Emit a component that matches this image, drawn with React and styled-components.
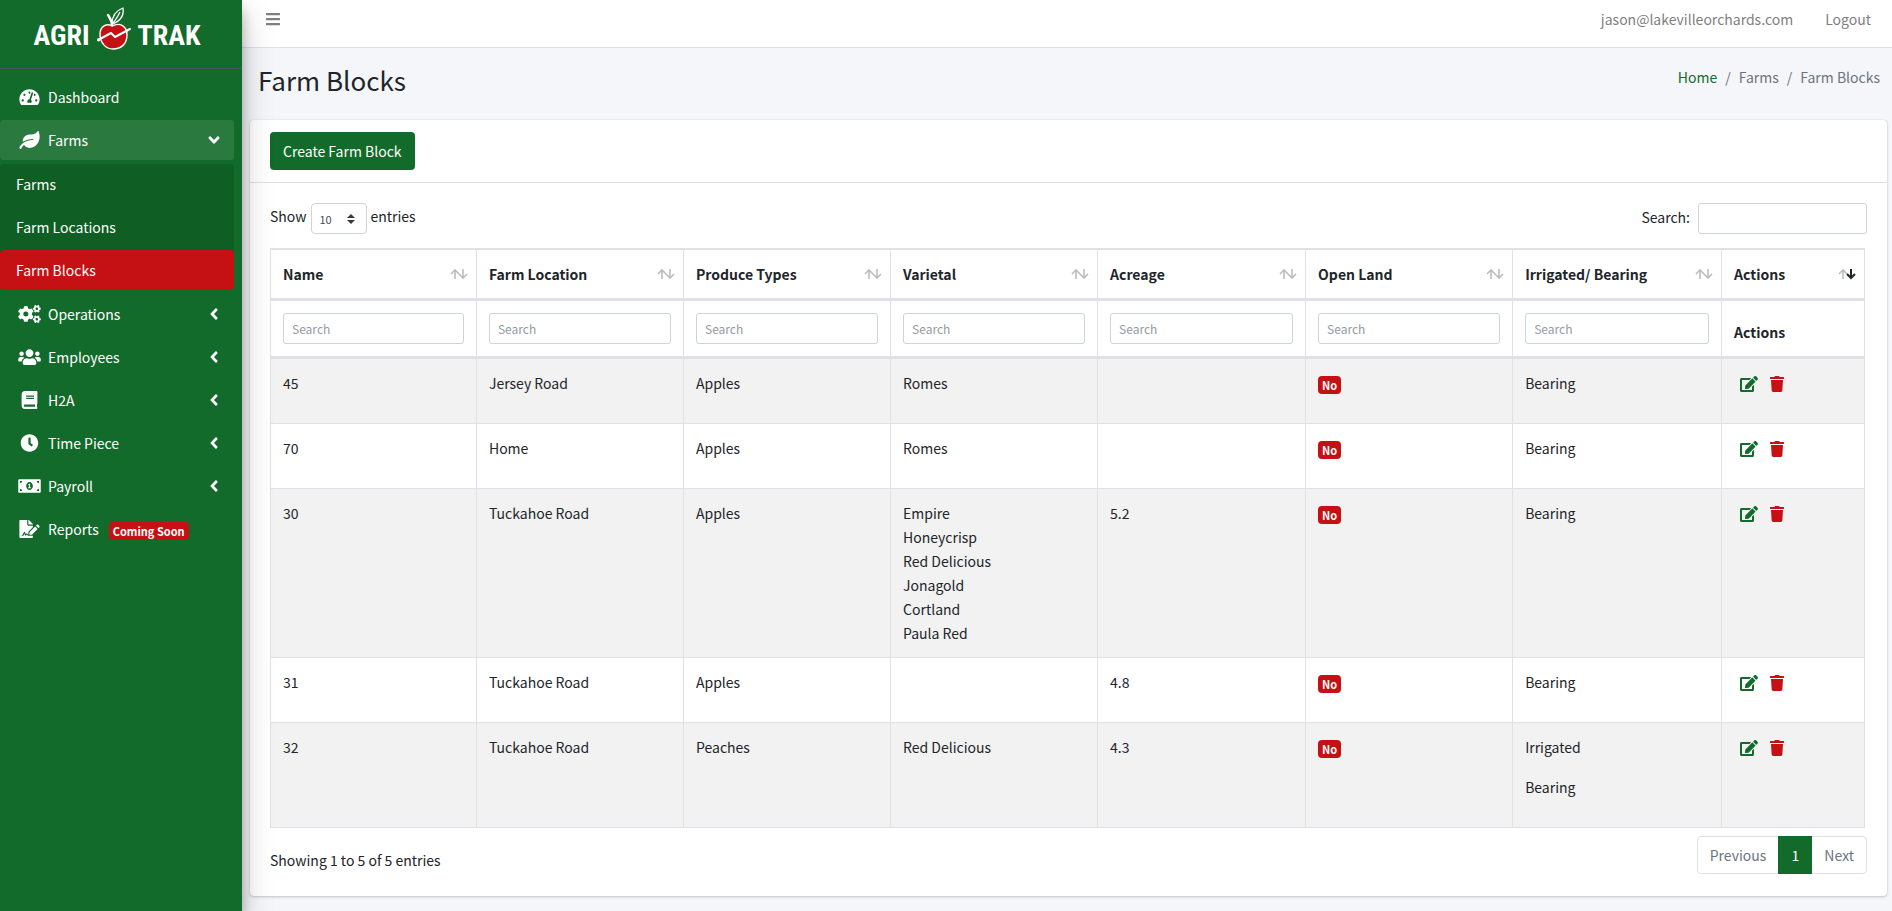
import React, { useState } from 'react';
import styled, { createGlobalStyle } from 'styled-components';
import {
    FaTachometerAlt, FaLeaf, FaCogs, FaUsers, FaBook, FaClock, FaMoneyBillAlt,
    FaFileSignature, FaAngleLeft, FaAngleDown, FaBars, FaEdit, FaTrash,
} from 'react-icons/fa';

const GREEN = '#126b2a';
const RED = '#c51114';
const LINE = '#dee2e6';

const farmPages = ['Farms', 'Farm Locations', 'Farm Blocks'];

const menu = [
    { label: 'Operations', icon: FaCogs },
    { label: 'Employees', icon: FaUsers },
    { label: 'H2A', icon: FaBook },
    { label: 'Time Piece', icon: FaClock },
    { label: 'Payroll', icon: FaMoneyBillAlt },
];

const columns = [
    { label: 'Name', width: '12.92%' },
    { label: 'Farm Location', width: '12.99%' },
    { label: 'Produce Types', width: '12.99%' },
    { label: 'Varietal', width: '12.99%' },
    { label: 'Acreage', width: '13.05%' },
    { label: 'Open Land', width: '12.99%' },
    { label: 'Irrigated/ Bearing', width: '13.11%' },
    { label: 'Actions', width: '8.96%' },
];

const blocks = [
    { name: '45', location: 'Jersey Road', produce: 'Apples', varietals: ['Romes'], acreage: '', tags: ['Bearing'] },
    { name: '70', location: 'Home', produce: 'Apples', varietals: ['Romes'], acreage: '', tags: ['Bearing'] },
    {
        name: '30', location: 'Tuckahoe Road', produce: 'Apples',
        varietals: ['Empire', 'Honeycrisp', 'Red Delicious', 'Jonagold', 'Cortland', 'Paula Red'],
        acreage: '5.2', tags: ['Bearing'],
    },
    { name: '31', location: 'Tuckahoe Road', produce: 'Apples', varietals: [], acreage: '4.8', tags: ['Bearing'] },
    { name: '32', location: 'Tuckahoe Road', produce: 'Peaches', varietals: ['Red Delicious'], acreage: '4.3', tags: ['Irrigated', 'Bearing'] },
];

function Logo() {
    return (
        <LogoLink href="#" aria-label="Agri Trak">
            <LogoWord>AGRI</LogoWord>
            <svg width="36" height="44" viewBox="0 0 36 44">
                <path d="M16 20 C11 17 4 20 4 28 C4 37 10 43 17 43 C25 43 31 38 31 29 C31 20 24 16 16 20Z" fill={RED} stroke="#fff" strokeWidth="1.4" />
                <path d="M16 19 C16 15 14 12 12 9" fill="none" stroke="#fff" strokeWidth="2.4" strokeLinecap="round" />
                <path d="M16 18 C16 10 19 5 27 2 C28 9 25 15 16 18 C20 14 22 10 24 6" fill="none" stroke="#fff" strokeWidth="1.3" strokeLinejoin="round" />
                <path d="M2 34 L15 27 L19 31 L34 23" fill="none" stroke="#fff" strokeWidth="2" strokeLinecap="round" strokeLinejoin="round" />
                <circle cx="2.6" cy="33.8" r="1.6" fill="#fff" />
            </svg>
            <LogoWord>TRAK</LogoWord>
        </LogoLink>
    );
}

function SortArrows({ descending }) {
    return (
        <svg width="18" height="12" viewBox="0 0 18 12" fill="none" stroke="#212529">
            <path d="M5 11V2M1 6L5 2L9 6" strokeWidth="1.6" opacity="0.3" />
            <path d="M13 1V10M9 6L13 10L17 6" strokeWidth={descending ? 2 : 1.6} opacity={descending ? 1 : 0.3} />
        </svg>
    );
}

function Sidebar() {
    return (
        <Side>
            <Logo />
            <Nav>
                <NavLink href="#"><NavIcon><FaTachometerAlt /></NavIcon>Dashboard</NavLink>
                <NavLink href="#" $open>
                    <NavIcon><FaLeaf /></NavIcon>Farms<Arrow><FaAngleDown /></Arrow>
                </NavLink>
                <Tree>
                    {farmPages.map((page) => (
                        <TreeLink key={page} href="#" $active={page === 'Farm Blocks'}>{page}</TreeLink>
                    ))}
                </Tree>
                {menu.map(({ label, icon: Icon }) => (
                    <NavLink key={label} href="#">
                        <NavIcon><Icon /></NavIcon>{label}<Arrow><FaAngleLeft /></Arrow>
                    </NavLink>
                ))}
                <NavLink href="#">
                    <NavIcon><FaFileSignature /></NavIcon>Reports<SoonBadge>Coming Soon</SoonBadge>
                </NavLink>
            </Nav>
        </Side>
    );
}

function BlocksTable() {
    return (
        <Table>
            <colgroup>
                {columns.map(({ label, width }) => <Col key={label} $width={width} />)}
            </colgroup>
            <thead>
                <tr>
                    {columns.map(({ label }) => (
                        <HeadCell key={label} scope="col">
                            <SortButton type="button">
                                {label}
                                <SortArrows descending={label === 'Actions'} />
                            </SortButton>
                        </HeadCell>
                    ))}
                </tr>
                <tr>
                    {columns.map(({ label }) => (
                        <HeadCell key={label}>
                            {label === 'Actions' ? label : <FilterInput type="text" placeholder="Search" aria-label={label} />}
                        </HeadCell>
                    ))}
                </tr>
            </thead>
            <tbody>
                {blocks.map((block) => (
                    <BodyRow key={block.name}>
                        <Cell>{block.name}</Cell>
                        <Cell>{block.location}</Cell>
                        <Cell>{block.produce}</Cell>
                        <Cell>{block.varietals.map((v) => <div key={v}>{v}</div>)}</Cell>
                        <Cell>{block.acreage}</Cell>
                        <Cell><LandBadge>No</LandBadge></Cell>
                        <Cell>{block.tags.map((tag) => <Tag key={tag}>{tag}</Tag>)}</Cell>
                        <Cell>
                            <Actions>
                                <IconButton type="button" aria-label="Edit" $color={GREEN} $width="18px"><FaEdit /></IconButton>
                                <IconButton type="button" aria-label="Delete" $color={RED} $width="14px"><FaTrash /></IconButton>
                            </Actions>
                        </Cell>
                    </BodyRow>
                ))}
            </tbody>
        </Table>
    );
}

function App() {
    const [length, setLength] = useState('10');

    return (
        <>
            <GlobalStyle />
            <Page>
                <Sidebar />
                <Content>
                    <TopBar>
                        <MenuButton type="button" aria-label="Toggle menu"><FaBars /></MenuButton>
                        <TopLinks>
                            <TopLink href="#">jason@lakevilleorchards.com</TopLink>
                            <TopLink href="#">Logout</TopLink>
                        </TopLinks>
                    </TopBar>
                    <PageHeader>
                        <Title>Farm Blocks</Title>
                        <Breadcrumb>
                            <a href="#">Home</a>
                            <span>/</span>
                            <span>Farms</span>
                            <span>/</span>
                            <span>Farm Blocks</span>
                        </Breadcrumb>
                    </PageHeader>
                    <Card>
                        <CardHeader>
                            <CreateButton type="button">Create Farm Block</CreateButton>
                        </CardHeader>
                        <CardBody>
                            <Controls>
                                <LengthLabel>
                                    Show
                                    <SelectWrap>
                                        <LengthSelect value={length} onChange={(e) => setLength(e.target.value)}>
                                            <option>10</option>
                                            <option>25</option>
                                            <option>50</option>
                                        </LengthSelect>
                                        <svg width="8" height="10" viewBox="0 0 4 5"><path fill="#343a40" d="M2 0L0 2h4zm0 5L0 3h4z" /></svg>
                                    </SelectWrap>
                                    entries
                                </LengthLabel>
                                <SearchLabel>
                                    Search:
                                    <SearchInput type="search" />
                                </SearchLabel>
                            </Controls>
                            <TableWrap>
                                <BlocksTable />
                            </TableWrap>
                            <TableFooter>
                                <Info>Showing 1 to 5 of 5 entries</Info>
                                <Pagination>
                                    <PageButton type="button">Previous</PageButton>
                                    <PageButton type="button" $current>1</PageButton>
                                    <PageButton type="button">Next</PageButton>
                                </Pagination>
                            </TableFooter>
                        </CardBody>
                    </Card>
                </Content>
            </Page>
        </>
    );
}

export default App;

const GlobalStyle = createGlobalStyle`
    * {
        box-sizing: border-box;
    }

    body {
        margin: 0;
        background: #f4f6f9;
        color: #212529;
    }

    body, button, input, select {
        font-family: "Source Sans Pro", "Noto Sans CJK JP", "Noto Sans", sans-serif;
        font-size: 14px;
        line-height: 24px;
    }

    a {
        text-decoration: none;
    }

    button {
        cursor: pointer;
    }
`;

const Page = styled.div`
    display: flex;
    min-height: 100vh;
`;

const Side = styled.aside`
    position: relative;
    z-index: 1;
    flex: none;
    width: 242px;
    background: ${GREEN};
    box-shadow: 0 14px 28px rgba(0, 0, 0, 0.25), 0 10px 10px rgba(0, 0, 0, 0.22);
`;

const LogoLink = styled.a`
    display: flex;
    justify-content: center;
    align-items: flex-start;
    gap: 6px;
    height: 69px;
    padding: 6px 8px 0 0;
    border-bottom: 1px solid #4b545c;
`;

const LogoWord = styled.span`
    padding-top: 16px;
    color: #fff;
    font-family: "Roboto Condensed", "Liberation Sans Narrow", "Open Sans Condensed", sans-serif;
    font-size: 28px;
    font-weight: 700;
    line-height: 28px;
`;

const Nav = styled.nav`
    display: flex;
    flex-direction: column;
    gap: 3px;
    padding: 8px 8px 8px 0;
`;

const NavLink = styled.a`
    display: flex;
    align-items: center;
    height: 40px;
    padding: 0 12px 0 16px;
    border-radius: 4px;
    background: ${props => props.$open ? 'rgba(255, 255, 255, 0.1)' : 'none'};
    color: #fff;
`;

const NavIcon = styled.span`
    display: flex;
    justify-content: center;
    width: 26px;
    margin-right: 6px;

    svg {
        width: 23px;
        height: 18px;
    }
`;

const Arrow = styled.span`
    display: flex;
    margin-left: auto;

    svg {
        width: 16px;
        height: 18px;
    }
`;

const Tree = styled.div`
    display: flex;
    flex-direction: column;
    gap: 3px;
    margin: 1px 0;
    border-radius: 4px;
    background: #0f5e23;
`;

const TreeLink = styled.a`
    display: flex;
    align-items: center;
    height: 40px;
    padding: 0 16px;
    border-radius: 4px;
    background: ${props => props.$active ? RED : 'none'};
    color: #fff;
`;

const Badge = styled.span`
    display: block;
    width: fit-content;
    padding: 0 4px;
    border-radius: 4px;
    background: ${RED};
    color: #fff;
    font-size: 11px;
    font-weight: 700;
    line-height: 18px;
`;

const SoonBadge = styled(Badge)`
    margin: 3px 0 0 10px;
`;

const LandBadge = styled(Badge)`
    margin-top: 5px;
`;

const Content = styled.main`
    flex: 1;
    min-width: 0;
`;

const TopBar = styled.header`
    display: flex;
    justify-content: space-between;
    align-items: center;
    height: 48px;
    padding: 0 5px 10px 8px;
    border-bottom: 1px solid ${LINE};
    background: #fff;
`;

const MenuButton = styled.button`
    display: flex;
    padding: 0 16px;
    border: 0;
    background: none;
    color: #7f7f7f;

    svg {
        width: 14px;
        height: 16px;
    }
`;

const TopLinks = styled.div`
    display: flex;
`;

const TopLink = styled.a`
    padding: 0 16px;
    color: #7f7f7f;
`;

const PageHeader = styled.div`
    display: flex;
    justify-content: space-between;
    align-items: flex-start;
    height: 72px;
    padding: 14px 12px 0 16px;
`;

const Title = styled.h1`
    margin: 0;
    font-size: 26px;
    font-weight: 400;
    line-height: 35px;
`;

const Breadcrumb = styled.nav`
    display: flex;
    gap: 8px;
    padding-top: 3px;
    color: #6c757d;

    a {
        color: ${GREEN};
    }
`;

const Card = styled.section`
    margin: 0 5px 15px 8px;
    border-radius: 4px;
    background: #fff;
    box-shadow: 0 0 1px rgba(0, 0, 0, 0.13), 0 1px 3px rgba(0, 0, 0, 0.2);
`;

const CardHeader = styled.div`
    padding: 12px 20px;
    border-bottom: 1px solid #dfdfdf;
`;

const CreateButton = styled.button`
    display: block;
    height: 38px;
    padding: 0 13px;
    border: 0;
    border-radius: 4px;
    background: ${GREEN};
    color: #fff;
`;

const CardBody = styled.div`
    padding: 20px 20px 22px;
`;

const Controls = styled.div`
    display: flex;
    justify-content: space-between;
    align-items: flex-start;
    margin-bottom: 14px;
`;

const LengthLabel = styled.label`
    display: flex;
    gap: 4px;
    line-height: 26px;
`;

const SelectWrap = styled.span`
    position: relative;

    svg {
        position: absolute;
        top: 11px;
        right: 12px;
        pointer-events: none;
    }
`;

const LengthSelect = styled.select`
    display: block;
    width: 56px;
    height: 31px;
    padding: 0 8px;
    border: 1px solid #ced4da;
    border-radius: 4px;
    background: #fff;
    color: #495057;
    font-size: 11px;
    appearance: none;
`;

const SearchLabel = styled.label`
    display: flex;
    gap: 8px;
    line-height: 29px;
`;

const SearchInput = styled.input`
    width: 169px;
    height: 31px;
    padding: 4px 8px;
    border: 1px solid #ced4da;
    border-radius: 3px;
    font-size: 12px;
`;

const TableWrap = styled.div`
    padding-right: 2px;
`;

const Table = styled.table`
    width: 100%;
    table-layout: fixed;
    border: 1px solid ${LINE};
    border-right: 0;
    border-spacing: 0;
`;

const Col = styled.col`
    width: ${props => props.$width};
`;

const HeadCell = styled.th`
    padding: 12px;
    border: solid ${LINE};
    border-width: 1px 1px 2px 0;
    font-weight: 700;
    text-align: left;
    vertical-align: bottom;
`;

const SortButton = styled.button`
    display: flex;
    justify-content: space-between;
    align-items: center;
    width: 100%;
    padding: 0;
    border: 0;
    background: none;
    color: inherit;
    font-weight: 700;

    svg {
        margin-right: -4px;
    }
`;

const FilterInput = styled.input`
    display: block;
    width: 100%;
    height: 31px;
    padding: 4px 8px;
    border: 1px solid #ced4da;
    border-radius: 3px;
    font-size: 12px;

    &::placeholder {
        color: #939ba2;
    }
`;

const BodyRow = styled.tr`
    height: 65px;

    &:nth-child(odd) {
        background: #f2f2f2;
    }
`;

const Cell = styled.td`
    padding: 12px;
    border: solid ${LINE};
    border-width: 1px 1px 0 0;
    vertical-align: top;
`;

const Tag = styled.p`
    margin: 0 0 16px;
`;

const Actions = styled.div`
    display: flex;
    gap: 12px;
    padding: 5px 0 0 6px;
`;

const IconButton = styled.button`
    display: flex;
    padding: 0;
    border: 0;
    background: none;
    color: ${props => props.$color};

    svg {
        width: ${props => props.$width};
        height: 16px;
    }
`;

const TableFooter = styled.div`
    display: flex;
    justify-content: space-between;
    align-items: flex-end;
    margin-top: 8px;
`;

const Info = styled.div`
    padding-bottom: 2px;
`;

const Pagination = styled.div`
    display: flex;
    border: 1px solid ${LINE};
    border-radius: 4px;
`;

const PageButton = styled.button`
    height: ${props => props.$current ? '38px' : '36px'};
    min-width: 34px;
    margin: ${props => props.$current ? '-1px 0' : '0'};
    padding: 0 12px;
    border: 0;
    background: ${props => props.$current ? GREEN : 'none'};
    color: ${props => props.$current ? '#fff' : '#6c757d'};
`;
